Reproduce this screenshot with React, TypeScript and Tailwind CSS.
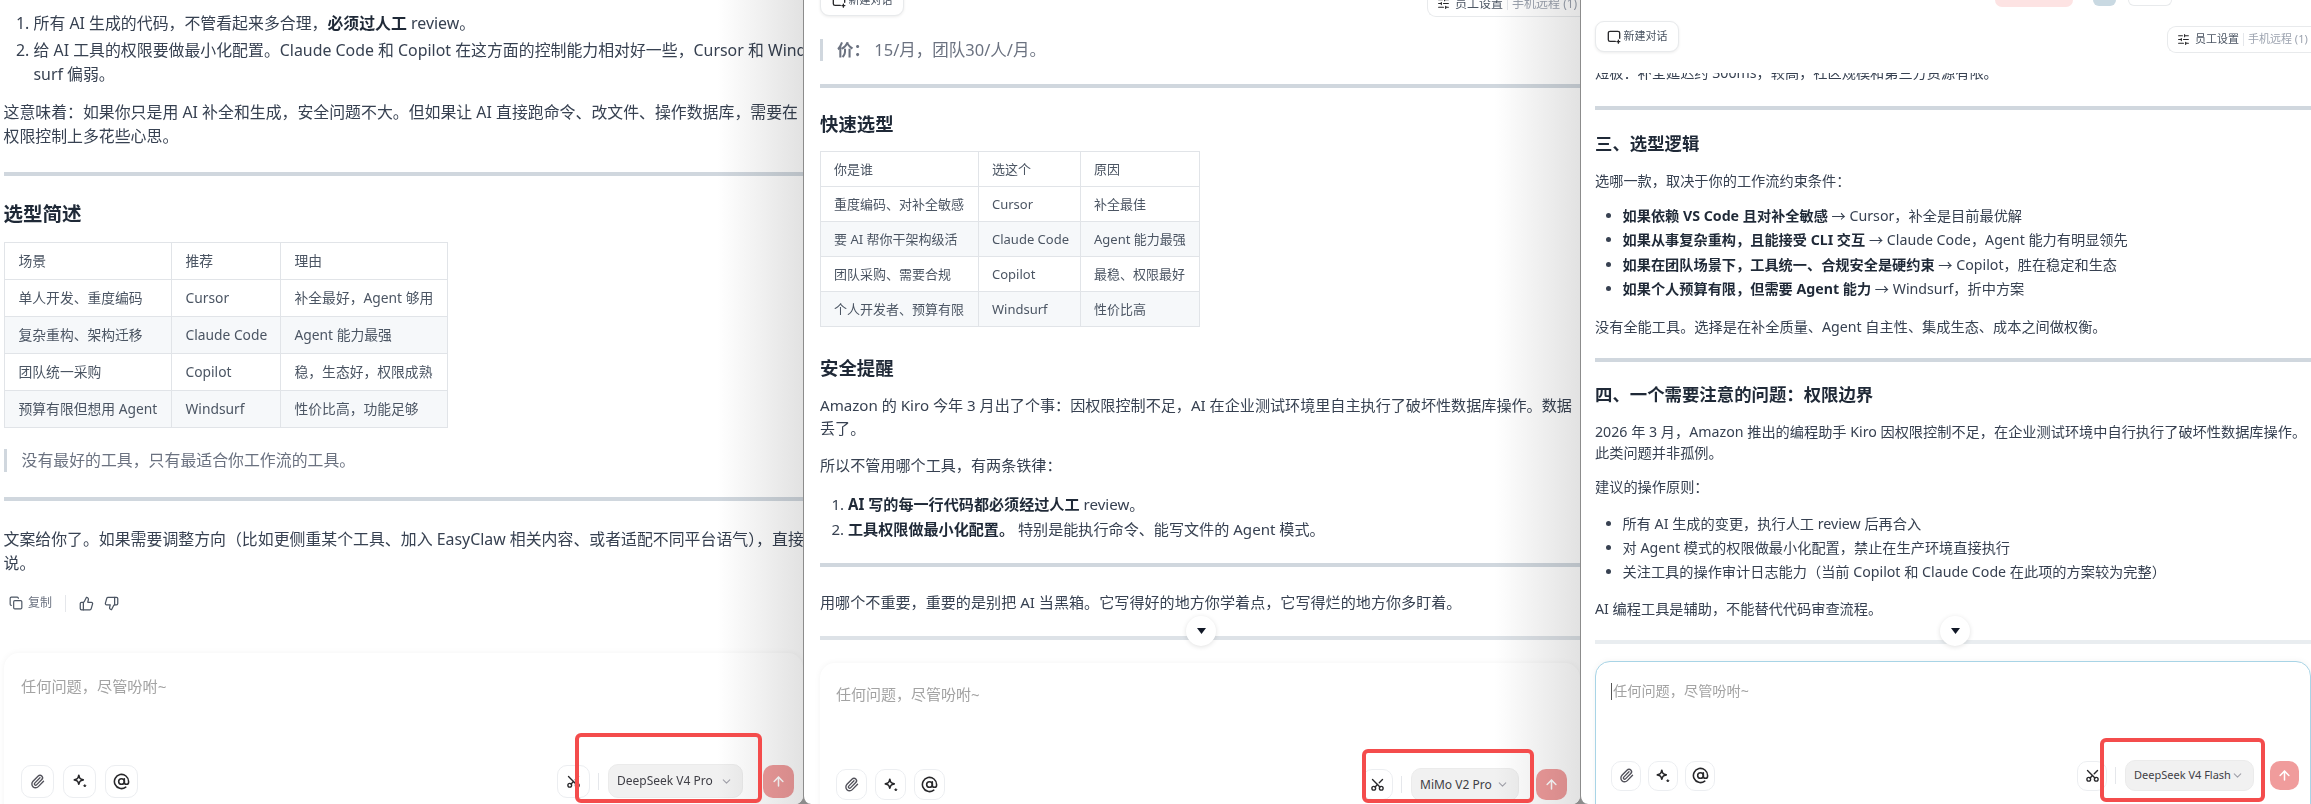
import type { ReactNode } from "react";
import {
  ArrowUp,
  AtSign,
  ChevronDown,
  Copy,
  Paperclip,
  Scissors,
  SlidersHorizontal,
  ThumbsDown,
  ThumbsUp,
} from "lucide-react";

// the copy is written with plain punctuation, the page shows the full-width forms
const zh = (s: string) =>
  s
    .replace(/,/g, "\uFF0C")
    .replace(/:/g, "\uFF1A")
    .replace(/\(/g, "\uFF08")
    .replace(/\)/g, "\uFF09");

function SparkIcon() {
  return (
    <svg width="16" height="16" viewBox="0 0 20 20" fill="none" stroke="#27272a" strokeWidth="2.2" strokeLinejoin="round">
      <path d="M8.5 3c.7 3.8 1.7 4.8 5.5 5.5-3.8.7-4.8 1.7-5.5 5.5C7.8 10.200 6.800 9.200 3 8.500 6.800 7.800 7.800 6.800 8.500 3z" />
      <path d="M16 14.500l1.500 1.500-1.500 1.500-1.500-1.500z" fill="#27272a" strokeWidth="1" />
    </svg>
  );
}

function NewChatIcon() {
  return (
    <svg width="14" height="14" viewBox="0 0 16 16" fill="none" stroke="#27272a" strokeWidth="1.5" strokeLinecap="round">
      <path d="M14.500 9.500V3.500a2 2 0 0 0-2-2h-9a2 2 0 0 0-2 2v7.500a2 2 0 0 0 2 2h6" />
      <path d="M13 11.500v3.500M11.300 13.200h3.400" />
    </svg>
  );
}

function TopBar({ className, right }: { className: string; right: string }) {
  return (
    <div className={`flex items-start justify-between ${className}`}>
      <div className="flex h-[31px] w-[84px] items-center justify-center gap-[3px] rounded-[9px] border border-[#e8eaec] bg-white text-[11px] text-[#4b5563] shadow-[0_1px_3px_rgba(0,0,0,0.08)]">
        <NewChatIcon />
        <span>新建对话</span>
      </div>
      <div className={`mt-[5px] flex h-[27px] shrink-0 items-center rounded-l-[9px] border border-r-0 border-[#e8eaec] bg-white pl-[9px] whitespace-nowrap ${right}`}>
        <SlidersHorizontal size={13} color="#27272a" />
        <span className="ml-[5px] text-[#4b5563]">员工设置</span>
        <span className="mx-[4px] h-[13px] w-px bg-[#e5e7eb]" />
        <span className="text-[#9ca3af]">手机远程 (1)</span>
      </div>
    </div>
  );
}

type TableProps = {
  head: string[];
  rows: string[][];
  cols: string[];
  cell: string;
  className: string;
};

function Table({ head, rows, cols, cell, className }: TableProps) {
  return (
    <table className={`table-fixed border-collapse text-[#4b5563] ${className}`}>
      <thead>
        <tr>
          {head.map((h, i) => (
            <th key={h} className={`border border-[#e1e4e8] text-left font-normal ${cols[i]} ${cell}`}>
              {h}
            </th>
          ))}
        </tr>
      </thead>
      <tbody>
        {rows.map((row, r) => (
          <tr key={row[0]} className={r % 2 === 1 ? "bg-[#f6f8fa]" : "bg-white"}>
            {row.map((c) => (
              <td key={c} className={`border border-[#e1e4e8] ${cell}`}>
                {zh(c)}
              </td>
            ))}
          </tr>
        ))}
      </tbody>
    </table>
  );
}

type ComposerProps = {
  model: string;
  box: string;
  text: string;
  toolbar: string;
  btn: string;
  gap: string;
  chip: string;
  send: string;
  caret?: boolean;
};

function Composer({ model, box, text, toolbar, btn, gap, chip, send, caret }: ComposerProps) {
  const toolBtn = `flex items-center justify-center rounded-[10px] border border-[#eceef1] bg-white ${btn}`;
  return (
    <div className={`h-[170px] shrink-0 rounded-[15px] bg-white shadow-[0_0_6px_rgba(0,0,0,0.05)] ${box}`}>
      <div className={`flex items-center leading-[24px] text-[#a3a3a3] ${text}`}>
        {caret && <span className="mr-px h-[17px] w-px bg-[#555]" />}
        {zh("任何问题,尽管吩咐~")}
      </div>
      <div className={`flex items-center justify-between ${toolbar}`}>
        <div className={`flex ${gap}`}>
          <div className={toolBtn}>
            <Paperclip size={15} color="#52525b" strokeWidth={2.2} />
          </div>
          <div className={toolBtn}>
            <SparkIcon />
          </div>
          <div className={toolBtn}>
            <AtSign size={17} color="#27272a" strokeWidth={2.2} />
          </div>
        </div>
        <div className="flex items-center">
          <div className={toolBtn}>
            <Scissors size={15} color="#27272a" strokeWidth={2.2} className="-rotate-90" />
          </div>
          <div className="ml-[8px] h-[17px] w-px bg-[#e5e7eb]" />
          <div className={`ml-[9px] flex items-center justify-between rounded-[10px] border border-[#ebebeb] bg-[#f1f1f1] pl-[8px] pr-[9px] text-[#3f3f46] ${chip}`}>
            <span className="whitespace-nowrap">{model}</span>
            <ChevronDown size={13} color="#a1a1aa" className="shrink-0" />
          </div>
          <div className={`flex items-center justify-center rounded-[10px] bg-[#f09c9c] ${send}`}>
            <ArrowUp size={15} color="white" strokeWidth={2.4} />
          </div>
        </div>
      </div>
    </div>
  );
}

function ScrollDown({ className }: { className: string }) {
  return (
    <div className={`absolute flex h-[30px] w-[30px] items-center justify-center rounded-full bg-white shadow-[0_1px_5px_rgba(0,0,0,0.12)] ${className}`}>
      <svg width="9" height="6" viewBox="0 0 9 6">
        <path d="M0 0h9L4.500 6z" fill="#111827" />
      </svg>
    </div>
  );
}

function Panel1() {
  return (
    <div className="relative flex h-[804px] w-[803px] shrink-0 flex-col overflow-hidden rounded-br-[8px] bg-white">
      <div className="h-[653px] shrink-0 overflow-hidden pl-[3.500px] pt-[11px] text-[15.900px] leading-[24px] whitespace-nowrap text-[#374151]">
        <ol className="list-decimal pl-[30px]">
          <li>
            {zh("所有 AI 生成的代码,不管看起来多合理,")}<b className="font-bold text-[#1f2937]">必须过人工</b> review。
          </li>
          <li className="mt-[3px]">
            {zh("给 AI 工具的权限要做最小化配置。Claude Code 和 Copilot 在这方面的控制能力相对好一些,Cursor 和 Wind")}
            <br />
            surf 偏弱。
          </li>
        </ol>
        <p className="mt-[15px] leading-[23.500px]">
          {zh("这意味着:如果你只是用 AI 补全和生成,安全问题不大。但如果让 AI 直接跑命令、改文件、操作数据库,需要在")}
          <br />
          权限控制上多花些心思。
        </p>
        <div className="mt-[24px] h-[4px] bg-[#d0d7de]" />
        <h2 className="mt-[24px] text-[19.500px] leading-[28px] font-bold text-[#1f2937]">选型简述</h2>
        <Table
          className="mt-[14px] w-[443px] text-[13.800px]"
          cols={["w-[167px]", "w-[109px]", "w-[167px]"]}
          cell="h-[37px] px-[14px]"
          head={["场景", "推荐", "理由"]}
          rows={[
            ["单人开发、重度编码", "Cursor", "补全最好,Agent 够用"],
            ["复杂重构、架构迁移", "Claude Code", "Agent 能力最强"],
            ["团队统一采购", "Copilot", "稳,生态好,权限成熟"],
            ["预算有限但想用 Agent", "Windsurf", "性价比高,功能足够"],
          ]}
        />
        <blockquote className="mt-[21px] h-[23px] border-l-[3px] border-[#d0d7de] pl-[15px] leading-[23px] text-[#6b7280]">
          {zh("没有最好的工具,只有最适合你工作流的工具。")}
        </blockquote>
        <div className="mt-[25px] h-[4px] bg-[#d0d7de]" />
        <p className="mt-[26px]">
          {zh("文案给你了。如果需要调整方向(比如更侧重某个工具、加入 EasyClaw 相关内容、或者适配不同平台语气),直接")}
          <br />
          说。
        </p>
        <div className="mt-[16px] flex items-center pl-[5.500px] text-[#6b7280]">
          <Copy size={14} color="#4b5563" />
          <span className="ml-[5px] text-[12px]">复制</span>
          <span className="mx-[13px] h-[17px] w-px bg-[#e5e7eb]" />
          <ThumbsUp size={15} color="#4b5563" />
          <ThumbsDown size={15} color="#4b5563" className="ml-[10px]" />
        </div>
      </div>
      <Composer
        model="DeepSeek V4 Pro"
        box="ml-[4px]"
        text="pl-[17px] pt-[21px] text-[15.200px]"
        toolbar="mt-[66px] pl-[17px] pr-[9px]"
        btn="h-[33px] w-[33px]"
        gap="gap-[9px]"
        chip="h-[34px] w-[135px] text-[12px]"
        send="ml-[20px] h-[33px] w-[31px]"
      />
      <div className="pointer-events-none absolute inset-y-0 right-0 w-[85px] bg-gradient-to-r from-white to-[#e2e2e2] mix-blend-multiply" />
      <div className="pointer-events-none absolute left-[575px] top-[733px] h-[70px] w-[187px] rounded-[6px] border-[4px] border-[#f44c4c]" />
    </div>
  );
}

function Panel2() {
  return (
    <div className="relative flex h-[804px] w-[777px] shrink-0 flex-col overflow-hidden rounded-b-[8px] border-l border-[#8c8c8c] bg-white">
      <TopBar className="-mt-[15px] h-[54px] shrink-0 pl-[16px]" right="w-[153px] text-[12px]" />
      <div className="h-[624px] shrink-0 overflow-hidden pl-[16px] text-[15.100px] leading-[24px] whitespace-nowrap text-[#374151]">
        <blockquote className="h-[22px] border-l-[3px] border-[#d0d7de] pl-[14px] text-[16.500px] leading-[22px] text-[#6b7280]">
          <b className="font-bold">{zh("价:")}</b> {zh("15/月,团队30/人/月。")}
        </blockquote>
        <div className="mt-[23px] h-[4px] bg-[#d0d7de]" />
        <h2 className="mt-[22px] text-[18.400px] leading-[28px] font-bold text-[#1f2937]">快速选型</h2>
        <Table
          className="mt-[13px] w-[379px] text-[13px]"
          cols={["w-[158px]", "w-[102px]", "w-[119px]"]}
          cell="h-[35px] px-[13px]"
          head={["你是谁", "选这个", "原因"]}
          rows={[
            ["重度编码、对补全敏感", "Cursor", "补全最佳"],
            ["要 AI 帮你干架构级活", "Claude Code", "Agent 能力最强"],
            ["团队采购、需要合规", "Copilot", "最稳、权限最好"],
            ["个人开发者、预算有限", "Windsurf", "性价比高"],
          ]}
        />
        <h2 className="mt-[27px] text-[18.400px] leading-[28px] font-bold text-[#1f2937]">安全提醒</h2>
        <p className="mt-[12px] leading-[23px]">
          {zh("Amazon 的 Kiro 今年 3 月出了个事:因权限控制不足,AI 在企业测试环境里自主执行了破坏性数据库操作。数据")}
          <br />
          丢了。
        </p>
        <p className="mt-[13px]">{zh("所以不管用哪个工具,有两条铁律:")}</p>
        <ol className="mt-[15px] list-decimal pl-[28px]">
          <li>
            <b className="font-bold text-[#1f2937]">AI 写的每一行代码都必须经过人工</b> review。
          </li>
          <li className="mt-px">
            <b className="font-bold text-[#1f2937]">工具权限做最小化配置。</b> 特别是能执行命令、能写文件的 Agent 模式。
          </li>
        </ol>
        <div className="mt-[22px] h-[4px] bg-[#d0d7de]" />
        <p className="mt-[23px]">{zh("用哪个不重要,重要的是别把 AI 当黑箱。它写得好的地方你学着点,它写得烂的地方你多盯着。")}</p>
        <div className="mt-[22px] h-[4px] bg-[#dde2e7]" />
      </div>
      <Composer
        model="MiMo V2 Pro"
        box="ml-[16px]"
        text="pl-[16px] pt-[19px] text-[15px]"
        toolbar="mt-[62px] pl-[16px] pr-[13px]"
        btn="h-[31px] w-[31px]"
        gap="gap-[8px]"
        chip="h-[33px] w-[108px] text-[12px]"
        send="ml-[17px] h-[31px] w-[31px]"
      />
      <ScrollDown className="left-[382px] top-[616px]" />
      <div className="pointer-events-none absolute inset-y-0 right-0 w-[85px] bg-gradient-to-r from-white to-[#e2e2e2] mix-blend-multiply" />
      <div className="pointer-events-none absolute left-[558px] top-[749px] h-[54px] w-[172px] rounded-[6px] border-[4px] border-[#f44c4c]" />
    </div>
  );
}

function Panel3() {
  return (
    <div className="relative flex h-[804px] min-w-0 flex-1 flex-col overflow-hidden rounded-bl-[8px] border-l border-[#8c8c8c] bg-white">
      <div className="flex h-[7px] shrink-0 items-start justify-end pr-[139px]">
        <div className="h-[7px] w-[78px] rounded-b-[7px] bg-[#fde3e3]" />
        <div className="ml-[20px] h-[6px] w-[23px] rounded-b-full bg-[#c9d9e2]" />
        <div className="ml-[12px] h-[6px] w-[44px] rounded-b-[6px] border border-t-0 border-[#e8eaec]" />
      </div>
      <TopBar className="h-[66px] shrink-0 pl-[14px] pt-[14px]" right="w-[144px] text-[11px]" />
      <div className="h-[588px] shrink-0 overflow-hidden pl-[14px] text-[14.200px] leading-[24px] whitespace-nowrap text-[#374151]">
        <p className="-mt-[12px]">{zh("短板:补全延迟约 300ms,较高,社区规模和第三方资源有限。")}</p>
        <div className="mt-[21px] h-[4px] bg-[#d0d7de]" />
        <h2 className="mt-[20px] text-[17.400px] leading-[26px] font-bold text-[#1f2937]">三、选型逻辑</h2>
        <p className="mt-[13px]">{zh("选哪一款,取决于你的工作流约束条件:")}</p>
        <ul className="mt-[11px] list-disc pl-[27.500px] leading-[24.400px]">
          <li>
            <b className="font-bold text-[#1f2937]">如果依赖 VS Code 且对补全敏感</b> {zh("→ Cursor,补全是目前最优解")}
          </li>
          <li>
            <b className="font-bold text-[#1f2937]">{zh("如果从事复杂重构,且能接受 CLI 交互")}</b> {zh("→ Claude Code,Agent 能力有明显领先")}
          </li>
          <li>
            <b className="font-bold text-[#1f2937]">{zh("如果在团队场景下,工具统一、合规安全是硬约束")}</b> {zh("→ Copilot,胜在稳定和生态")}
          </li>
          <li>
            <b className="font-bold text-[#1f2937]">{zh("如果个人预算有限,但需要 Agent 能力")}</b> {zh("→ Windsurf,折中方案")}
          </li>
        </ul>
        <p className="mt-[13px]">没有全能工具。选择是在补全质量、Agent 自主性、集成生态、成本之间做权衡。</p>
        <div className="mt-[19px] h-[4px] bg-[#d0d7de]" />
        <h2 className="mt-[19px] text-[17.400px] leading-[26px] font-bold text-[#1f2937]">{zh("四、一个需要注意的问题:权限边界")}</h2>
        <p className="mt-[14px] leading-[21px]">
          {zh("2026 年 3 月,Amazon 推出的编程助手 Kiro 因权限控制不足,在企业测试环境中自行执行了破坏性数据库操作。")}
          <br />
          此类问题并非孤例。
        </p>
        <p className="mt-[12px]">{zh("建议的操作原则:")}</p>
        <ul className="mt-[13px] list-disc pl-[27.500px] leading-[24.400px]">
          <li>{zh("所有 AI 生成的变更,执行人工 review 后再合入")}</li>
          <li>{zh("对 Agent 模式的权限做最小化配置,禁止在生产环境直接执行")}</li>
          <li>{zh("关注工具的操作审计日志能力(当前 Copilot 和 Claude Code 在此项的方案较为完整)")}</li>
        </ul>
        <p className="mt-[12px]">{zh("AI 编程工具是辅助,不能替代代码审查流程。")}</p>
        <div className="mt-[19px] h-[4px] bg-[#e9edf0]" />
      </div>
      <Composer
        model="DeepSeek V4 Flash"
        box="ml-[14px] border border-[#a8d4e6]"
        text="pl-[15px] pt-[17px] text-[14.200px]"
        toolbar="mt-[57px] pl-[15px] pr-[11px]"
        btn="h-[30px] w-[30px]"
        gap="gap-[7px]"
        chip="h-[31px] w-[129px] text-[11px]"
        send="ml-[16px] h-[29px] w-[29px]"
        caret
      />
      <ScrollDown className="left-[359px] top-[616px]" />
      <div className="pointer-events-none absolute left-[519px] top-[738px] h-[64px] w-[165px] rounded-[6px] border-[4px] border-[#f44c4c]" />
    </div>
  );
}

export default function App(): ReactNode {
  return (
    <div className="flex h-[804px] w-[2311px] overflow-hidden bg-[#8c8c8c] font-['Noto_Sans','Noto_Sans_CJK_SC',sans-serif]">
      <Panel1 />
      <Panel2 />
      <Panel3 />
    </div>
  );
}
